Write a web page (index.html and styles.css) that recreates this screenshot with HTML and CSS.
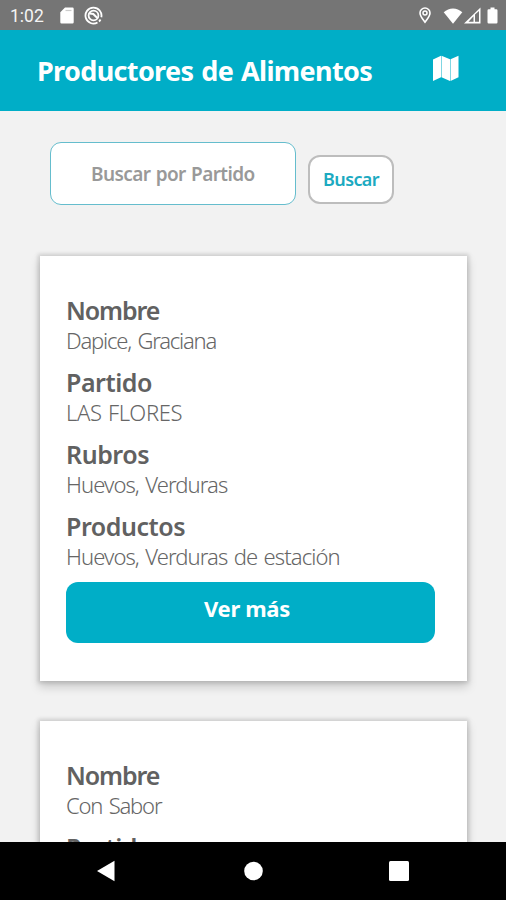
FILE: index.html
```html
<!DOCTYPE html>
<html lang="es">
<head>
<meta charset="utf-8">
<title>Productores de Alimentos</title>
<link rel="stylesheet" href="styles.css">
</head>
<body>
<div class="screen">
  <div class="status">
    <span class="clock">1:02</span>
    <svg class="sd" width="14" height="17" viewBox="0 0 14 17"><path fill="#fff" d="M5 .5h7.500a1.200 1.200 0 0 1 1.200 1.200v13.600a1.200 1.200 0 0 1-1.200 1.200h-11a1.200 1.200 0 0 1-1.200-1.200V5.300z"/><path stroke="#ccc" stroke-width="1.200" d="M5.500 3.500h6"/></svg>
    <svg class="sync" width="19" height="19" viewBox="0 0 19 19" fill="none" stroke="#fff"><path stroke-width="1.800" d="M13.500 16.500A8 8 0 1 1 17.300 11.300M15 15.500a8 8 0 0 0 1.500-2"/><circle cx="9.500" cy="9.500" r="4.900" stroke-width="1.800"/><path stroke-width="2" d="M5.800 7.500l3.500.5 4 4"/></svg>
    <svg class="pin" width="12" height="17" viewBox="0 0 12 17" fill="none" stroke="#fff"><path stroke-width="1.600" d="M6 15.200C3.800 12.300 1 9 1 6a5 5 0 0 1 10 0c0 3-2.800 6.300-5 9.200z"/><circle cx="6" cy="6" r="2" stroke-width="1.500"/></svg>
    <svg class="wifi" width="20" height="16" viewBox="0 0 20 16"><path fill="#fff" d="M.7 4.300C6-.8 14-.8 19.300 4.300L10 15.700z"/></svg>
    <svg class="signal" width="17" height="17" viewBox="0 0 17 17"><path fill="#fff" fill-rule="evenodd" d="M0 16.500L16.500.5v16zM9.500 9.300v5.400h-5zM11 7.500v7.200h4V4z"/></svg>
    <svg class="battery" width="11" height="17" viewBox="0 0 11 17"><path fill="#fff" d="M3.500.5h4v1.700H9.300a1.200 1.200 0 0 1 1.200 1.200v11.900a1.200 1.200 0 0 1-1.200 1.200H1.700a1.200 1.200 0 0 1-1.200-1.200V3.400a1.200 1.200 0 0 1 1.200-1.200h1.800z"/></svg>
  </div>
  <header class="header">
    <h1 class="title">Productores de Alimentos</h1>
    <svg class="map" width="27" height="27" viewBox="0 0 27 27" fill="#fff"><path d="M1 4.500L9 .8v21.500L1 26zM9.500.8l8.500 3.500V26l-8.500-3.700zM18.500 4.300L26.500.8v21.500L18.500 26z"/></svg>
  </header>
  <main class="content">
    <form class="search">
      <div class="field"><span class="placeholder">Buscar por Partido</span></div>
      <button class="find" type="button"><span class="find-text">Buscar</span></button>
    </form>
    <section class="card">
      <dl class="facts">
        <dt class="label label-tight">Nombre</dt><dd class="value value-tight">Dapice, Graciana</dd>
        <dt class="label">Partido</dt><dd class="value value-caps">LAS FLORES</dd>
        <dt class="label">Rubros</dt><dd class="value">Huevos, Verduras</dd>
        <dt class="label">Productos</dt><dd class="value">Huevos, Verduras de estación</dd>
      </dl>
      <button class="more" type="button"><span class="more-text">Ver más</span></button>
    </section>
    <section class="card">
      <dl class="facts">
        <dt class="label label-tight">Nombre</dt><dd class="value value-tight">Con Sabor</dd>
        <dt class="label">Partido</dt><dd class="value"></dd>
      </dl>
    </section>
  </main>
  <nav class="nav">
    <svg width="20" height="22" viewBox="0 0 20 22"><path fill="#fff" d="M1 11L18.500.8v20.400z"/></svg>
    <svg width="20" height="20" viewBox="0 0 20 20"><circle cx="10.500" cy="10" r="9.300" fill="#fff"/></svg>
    <svg width="20" height="20" viewBox="0 0 20 20"><rect width="20" height="20" rx="1.500" fill="#fff"/></svg>
  </nav>
</div>
</body>
</html>
```

FILE: styles.css
```css
* { box-sizing: border-box; }
body { margin: 0; font-family: "Noto Sans", "Open Sans", sans-serif; }
.screen { width: 506px; height: 900px; overflow: hidden; display: flex; flex-direction: column; background: #f2f2f2; }
.status { height: 30px; flex: none; display: flex; align-items: center; padding: 1px 8px 0 10px; background: #757575; }
.clock { width: 49px; font: 17.5px/28px Roboto, sans-serif; color: #f4f4f4; }
.sd { margin-left: 1px; }
.sync { margin-left: 10px; }
.pin { margin-left: auto; }
.wifi { margin-left: 12px; }
.signal { margin-left: 1px; }
.battery { margin-left: 6px; }
.header { height: 81px; flex: none; display: flex; align-items: center; justify-content: space-between; padding: 0 47px 4px 37px; background: #00aec7; }
.title { margin: 0; padding-top: 5px; font-size: 27px; font-weight: 700; line-height: 36px; color: #fff; white-space: nowrap; letter-spacing: -0.65px; word-spacing: 1.5px; }
.content { flex: 1; min-height: 0; overflow: hidden; padding: 31px 38px 0 40px; }
.search { height: 114px; display: flex; align-items: flex-start; margin: 0; padding-left: 10px; gap: 12px; }
.field { width: 246px; height: 63px; padding: 0 0 0 40px; border: 1px solid #65bdcd; border-radius: 11px; background: #fff; display: flex; align-items: center; }
.placeholder { font-size: 19px; font-weight: 600; color: #999; white-space: nowrap; letter-spacing: -0.6px; word-spacing: 1px; }
.find { width: 86px; height: 49px; margin-top: 13px; padding: 0 0 2px; border: 2px solid #bdbdbd; border-radius: 12px; background: #fff; font-family: inherit; }
.find-text { font-size: 18px; font-weight: 600; color: #1caac1; letter-spacing: -0.6px; }
.card { width: 427px; height: 425px; margin-bottom: 40px; padding: 39px 32px 0 26px; background: #fff; box-shadow: 0 5px 9px 1px rgba(0, 0, 0, .17), 0 0 4px 2px rgba(0, 0, 0, .13); }
.facts { margin: 0; }
.label { font-size: 25px; font-weight: 600; line-height: 30px; color: #616161; letter-spacing: -0.45px; }
.label-tight { letter-spacing: -1.1px; }
.value { margin: 0 0 12px; height: 30px; font-size: 22px; font-weight: 300; line-height: 30px; color: #666; white-space: nowrap; letter-spacing: -0.92px; word-spacing: 1.6px; }
.value-tight { letter-spacing: -1.2px; word-spacing: 2px; }
.value-caps { letter-spacing: -0.35px; word-spacing: 1px; }
.more { width: 369px; height: 61px; margin-top: -1px; padding: 0 7px 9px 0; display: block; border: 0; border-radius: 12px; background: #00aec7; font-family: inherit; }
.more-text { font-size: 22px; font-weight: 700; color: #fff; letter-spacing: -0.35px; }
.nav { height: 58px; flex: none; display: flex; align-items: center; justify-content: space-between; padding: 0 97px 0 96px; background: #000; }
```
